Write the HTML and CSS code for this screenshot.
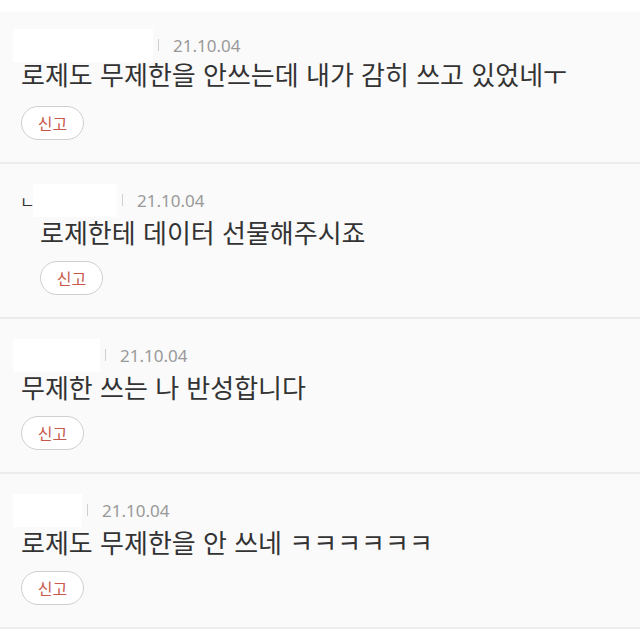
FILE: index.html
```html
<!DOCTYPE html>
<html lang="ko">
<head>
	<meta charset="UTF-8">
	<meta name="viewport" content="width=device-width, initial-scale=1.0">
	<title>댓글</title>
	<link rel="stylesheet" href="styles.css">
</head>
<body>
	<ul class="comments">
		<li class="comment first">
			<div class="meta">
				<span class="name" style="width:140px"></span>
				<span class="bar"></span>
				<span class="date">21.10.04</span>
			</div>
			<p class="text">로제도 무제한을 안쓰는데 내가 감히 쓰고 있었네ㅜ</p>
			<button class="report" type="button">신고</button>
		</li>
		<li class="comment reply">
			<div class="meta">
				<span class="arrow">ㄴ</span>
				<span class="name" style="width:84px"></span>
				<span class="bar"></span>
				<span class="date">21.10.04</span>
			</div>
			<p class="text">로제한테 데이터 선물해주시죠</p>
			<button class="report" type="button">신고</button>
		</li>
		<li class="comment">
			<div class="meta">
				<span class="name" style="width:87px"></span>
				<span class="bar"></span>
				<span class="date">21.10.04</span>
			</div>
			<p class="text">무제한 쓰는 나 반성합니다</p>
			<button class="report" type="button">신고</button>
		</li>
		<li class="comment">
			<div class="meta">
				<span class="name" style="width:69px"></span>
				<span class="bar"></span>
				<span class="date">21.10.04</span>
			</div>
			<p class="text">로제도 무제한을 안 쓰네 ㅋㅋㅋㅋㅋㅋ</p>
			<button class="report" type="button">신고</button>
		</li>
	</ul>
</body>
</html>
```

FILE: styles.css
```css
body {
	margin: 0;
	background: #fff;
	font-family: "Noto Sans CJK KR", "Noto Sans", sans-serif;
}

.comments {
	list-style: none;
	margin: 0;
	padding: 12px 0 0;
}

.comment {
	background: #fafafa;
	border-bottom: 2px solid #ececec;
	height: 155px;
	box-sizing: border-box;
	padding: 24px 0 0 21px;
}

.comment.first {
	height: 152px;
	padding-top: 21px;
}

.first .text {
	margin-top: 0;
}

.first .report {
	margin-top: 15px;
}

.comment.reply {
	padding-left: 40px;
}

.meta {
	display: flex;
	align-items: center;
	height: 24px;
	margin-left: -8px;
}

.reply .meta {
	margin-left: -20px;
}

.arrow {
	font-size: 16px;
	color: #333;
	width: 13px;
	line-height: 1;
	margin-top: 2px;
}

.name {
	display: block;
	height: 33px;
	background: #fff;
	flex: none;
}

.bar {
	width: 1px;
	height: 12px;
	background: #cfcfcf;
	margin: 0 14px 0 5px;
}

.date {
	font-family: "Noto Sans", sans-serif;
	font-size: 17px;
	color: #999;
}

.text {
	margin: 3px 0 0;
	font-size: 26px;
	line-height: 34px;
	color: #333;
}

.report {
	display: block;
	margin-top: 12px;
	width: 63px;
	height: 34px;
	padding: 0;
	background: #fff;
	border: 1px solid #cfcfcf;
	border-radius: 9999px;
	font-family: "Noto Sans CJK KR", sans-serif;
	font-size: 16px;
	color: #c8574c;
}
```
